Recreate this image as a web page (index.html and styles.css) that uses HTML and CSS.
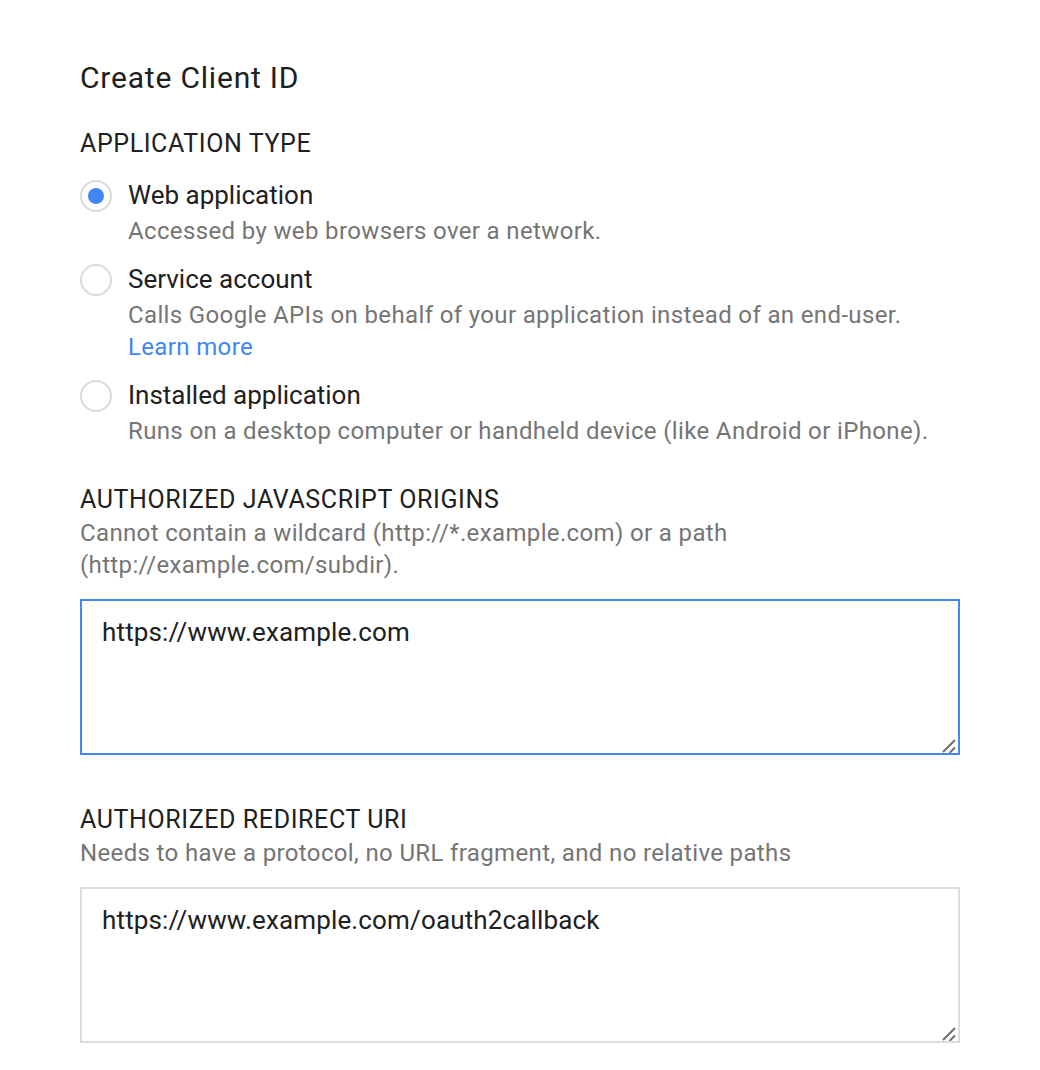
FILE: index.html
```html
<!DOCTYPE html>
<html>
<head>
<meta charset="utf-8">
<link rel="stylesheet" href="styles.css">
</head>
<body>
<div class="page">
  <h1 class="title">Create Client ID</h1>
  <div class="section-label type-label">APPLICATION TYPE</div>
  <div class="options">
    <div class="option">
      <span class="radio checked"><span class="dot"></span></span>
      <div class="option-text">
        <div class="option-name">Web application</div>
        <div class="option-desc">Accessed by web browsers over a network.</div>
      </div>
    </div>
    <div class="option">
      <span class="radio"></span>
      <div class="option-text">
        <div class="option-name">Service account</div>
        <div class="option-desc">Calls Google APIs on behalf of your application instead of an end-user.<br><a class="link" href="#">Learn more</a></div>
      </div>
    </div>
    <div class="option">
      <span class="radio"></span>
      <div class="option-text">
        <div class="option-name">Installed application</div>
        <div class="option-desc">Runs on a desktop computer or handheld device (like Android or iPhone).</div>
      </div>
    </div>
  </div>

  <div class="field origins">
    <div class="section-label">AUTHORIZED JAVASCRIPT ORIGINS</div>
    <div class="field-desc">Cannot contain a wildcard (http://*.example.com) or a path<br>(http://example.com/subdir).</div>
    <div class="box-wrap">
      <textarea class="box focused">https://www.example.com</textarea>
      <svg class="grip" viewBox="0 0 14 14" width="14" height="14"><path d="M1 13 L13 1 M7.5 14 L13 8.5" stroke="#6e6e6e" stroke-width="2" stroke-linecap="butt" fill="none"/></svg>
    </div>
  </div>

  <div class="field redirect">
    <div class="section-label">AUTHORIZED REDIRECT URI</div>
    <div class="field-desc">Needs to have a protocol, no URL fragment, and no relative paths</div>
    <div class="box-wrap">
      <textarea class="box">https://www.example.com/oauth2callback</textarea>
      <svg class="grip" viewBox="0 0 14 14" width="14" height="14"><path d="M1 13 L13 1 M7.5 14 L13 8.5" stroke="#6e6e6e" stroke-width="2" stroke-linecap="butt" fill="none"/></svg>
    </div>
  </div>
</div>
</body>
</html>
```

FILE: styles.css
```css
html, body {
  margin: 0;
  padding: 0;
  background: #ffffff;
}
body {
  font-family: Roboto, "Liberation Sans", Arial, sans-serif;
  color: #202020;
}
.page {
  padding: 60px 0 0 80px;
  width: 880px;
}
.title {
  margin: 0;
  font-size: 30px;
  font-weight: 400;
  line-height: 36px;
  letter-spacing: 0.8px;
  color: #202020;
}
.section-label {
  font-size: 25px;
  line-height: 32px;
  color: #202020;
  letter-spacing: 0.6px;
}
.type-label {
  margin-top: 32px;
}
.options {
  margin-top: 19px;
  display: flex;
  flex-direction: column;
  gap: 16px;
}
.option {
  display: flex;
  align-items: flex-start;
  gap: 16px;
}
.radio {
  flex: none;
  width: 28px;
  height: 28px;
  border: 2px solid #dadada;
  border-radius: 50%;
  margin-top: 1px;
  display: flex;
  align-items: center;
  justify-content: center;
}
.radio .dot {
  width: 16px;
  height: 16px;
  border-radius: 50%;
  background: #4285f4;
}
.option-name {
  font-size: 26px;
  line-height: 32px;
  color: #202020;
}
.option-desc {
  margin-top: 4px;
  font-size: 24px;
  line-height: 32px;
  letter-spacing: 0.36px;
  color: #757575;
}
.link {
  color: #4285f4;
  text-decoration: none;
}
.field {
  display: flex;
  flex-direction: column;
}
.origins {
  margin-top: 37px;
}
.redirect {
  margin-top: 49px;
}
.field-desc {
  margin-top: 1px;
  font-size: 24px;
  line-height: 32px;
  letter-spacing: 0.36px;
  color: #757575;
}
.redirect .field-desc {
  margin-top: 1px;
}
.box-wrap {
  position: relative;
  width: 880px;
  margin-top: 18px;
}
.redirect .box-wrap {
  margin-top: 18px;
}
.box {
  display: block;
  box-sizing: border-box;
  width: 880px;
  height: 156px;
  margin: 0;
  padding: 15px 20px;
  border: 2px solid #dcdcdc;
  border-radius: 0;
  font-family: Roboto, "Liberation Sans", Arial, sans-serif;
  font-size: 26px;
  line-height: 32px;
  letter-spacing: 0.15px;
  color: #202020;
  resize: none;
  outline: none;
  background: #fff;
}
.box.focused {
  border-color: #4285f4;
}
.grip {
  position: absolute;
  right: 4px;
  bottom: 2px;
  display: block;
}
```
